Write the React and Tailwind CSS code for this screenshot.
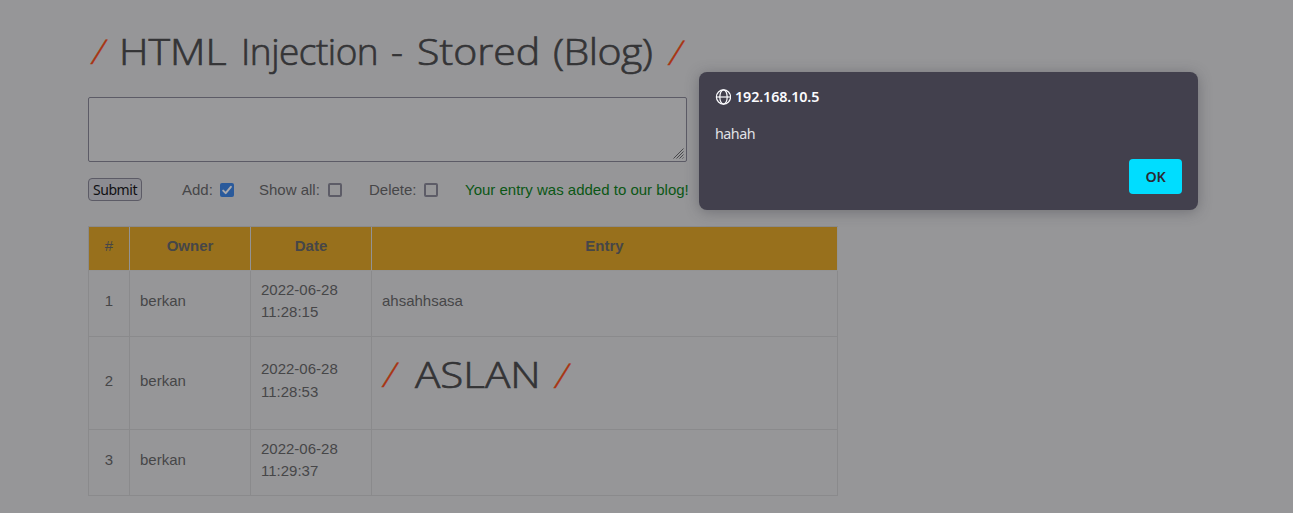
import React from "react";

const rows = [
  { id: 1, owner: "berkan", date: "2022-06-28", time: "11:28:15", height: "h-[66px]", entry: "ahsahhsasa" },
  { id: 2, owner: "berkan", date: "2022-06-28", time: "11:28:53", height: "h-[93px]", heading: true },
  { id: 3, owner: "berkan", date: "2022-06-28", time: "11:29:37", height: "h-[66px]", entry: "" },
];

const columns = "grid grid-cols-[41px_121px_121px_466px]";
const cell = "flex items-center border-r border-b border-[#8a8a8c]";
const headCell = "flex items-center justify-center border-r border-b border-[#939394] pb-1";
const display = "font-['Open_Sans',sans-serif] font-light text-[37px] leading-[48px] text-[#343436] [-webkit-text-stroke:0.7px_#343436]";

function Slash() {
  return <span className="inline-block w-[17px] shrink-0 -skew-x-[14deg] text-center text-[34px] text-[#a9320f] [-webkit-text-stroke:0.6px_#a9320f]">/</span>;
}

function Word({ className, children }) {
  return <span className={`block shrink-0 origin-left whitespace-nowrap ${className}`}>{children}</span>;
}

function Checkbox({ checked }) {
  return checked ? (
    <span className="flex h-[14px] w-[14px] items-center justify-center rounded-[2px] bg-[#2a5a9b]">
      <svg viewBox="0 0 14 14" className="h-[14px] w-[14px]" fill="none" stroke="#a9a9ad" strokeWidth="2" strokeLinecap="round" strokeLinejoin="round">
        <path d="M3.2 7.6 5.7 10.1 10.9 3.8" />
      </svg>
    </span>
  ) : (
    <span className="h-[14px] w-[14px] rounded-[2px] border-2 border-[#5d5c67]" />
  );
}

function Globe() {
  return (
    <svg viewBox="0 0 16 16" className="h-4 w-4" fill="none" stroke="#fbfbfe" strokeWidth="1.2">
      <circle cx="8.5" cy="8" r="7.1" />
      <ellipse cx="8.5" cy="8" rx="3.7" ry="7.1" />
      <path d="M1.5 8h14" />
    </svg>
  );
}

export default function App() {
  return (
    <div className="relative h-[513px] w-[1293px] overflow-hidden bg-[#969698] pl-[88px] font-['Liberation_Sans',sans-serif] text-[15px] leading-[22.5px] text-[#464648]">
      <h1 className={`flex h-[97px] pt-[27px] ${display}`}>
        <Slash />
        <Word className="ml-[14px] w-[107px] scale-x-[1.11]">HTML</Word>
        <Word className="ml-[15px] w-[137px] tracking-[-0.5px]">Injection</Word>
        <Word className="ml-[13px] w-[13px]">-</Word>
        <Word className="ml-[13px] w-[123px] scale-x-[1.11]">Stored</Word>
        <Word className="ml-[13px] w-[102px] scale-x-[1.11] tracking-[-0.5px]">(Blog)</Word>
        <span className="ml-[13px]"><Slash /></span>
      </h1>

      <div className="flex h-[65px] w-[599px] items-end justify-end rounded-[2px] border border-[#5c5b66] bg-[#99999b] p-[2px]">
        <svg viewBox="0 0 11 11" className="h-[11px] w-[11px]" stroke="#48484b" strokeWidth="1">
          <path d="M.5 10.5l10-10M3.5 10.5l7-7M6.5 10.5l4-4M9.5 10.5l1-1" />
        </svg>
      </div>

      <div className="mt-4 flex h-[23px] items-center">
        <button className="h-[23px] w-[54px] rounded-[4px] border border-[#5c5b66] bg-[#8c8c92] text-center font-['Noto_Sans',sans-serif] text-[14px] leading-[22px] tracking-[-0.45px] text-[#101012]">Submit</button>
        <label className="ml-[40px] flex w-[77px] items-center gap-[7px]"><span className="pt-[2px]">Add:</span><Checkbox checked /></label>
        <label className="flex w-[110px] items-center gap-[8px]"><span className="pt-[2px]">Show all:</span><Checkbox /></label>
        <label className="flex w-[96px] items-center gap-[7px]"><span className="pt-[2px]">Delete:</span><Checkbox /></label>
        <span className="pt-[2px] whitespace-nowrap text-[#0b5715]">Your entry was added to our blog!</span>
      </div>

      <div className="mt-[25px] w-[750px] border-t border-l border-[#8a8a8c]">
        <div className={`${columns} h-[44px] bg-[#98701c]`}>
          <div className={headCell}>#</div>
          <div className={`${headCell} font-bold`}>Owner</div>
          <div className={`${headCell} font-bold`}>Date</div>
          <div className={`${headCell} font-bold`}>Entry</div>
        </div>
        {rows.map((row) => (
          <div key={row.id} className={`${columns} ${row.height}`}>
            <div className={`${cell} justify-center pb-1`}>{row.id}</div>
            <div className={`${cell} px-[10px] pb-1`}>{row.owner}</div>
            <div className={`${cell} px-[10px] pb-[5px]`}>
              <div>{row.date}<br />{row.time}</div>
            </div>
            <div className={`${cell} px-[10px] pb-1`}>
              {row.heading ? (
                <h1 className={`flex pb-[13px] ${display}`}>
                  <Slash />
                  <Word className="ml-[16px] w-[125px] scale-x-[1.14]">ASLAN</Word>
                  <span className="ml-[14px]"><Slash /></span>
                </h1>
              ) : row.entry}
            </div>
          </div>
        ))}
      </div>

      <div role="dialog" className="absolute top-[72px] left-[699px] flex h-[138px] w-[499px] flex-col rounded-[8px] bg-[#42404d] p-4 font-['Noto_Sans',sans-serif] text-[14.3px] leading-[18px] text-[#fbfbfe] shadow-[0_2px_14px_rgba(58,57,68,0.4)]">
        <div className="flex items-center gap-[4px] font-semibold tracking-[-0.1px]"><Globe />192.168.10.5</div>
        <div className="mt-[19px] tracking-[-0.5px] text-[#e0e0e6]">hahah</div>
        <button className="mt-auto h-[35px] w-[53px] self-end rounded-[4px] bg-[#00ddff] text-center font-semibold tracking-[-0.3px] text-[#2b2a33]">OK</button>
      </div>
    </div>
  );
}
